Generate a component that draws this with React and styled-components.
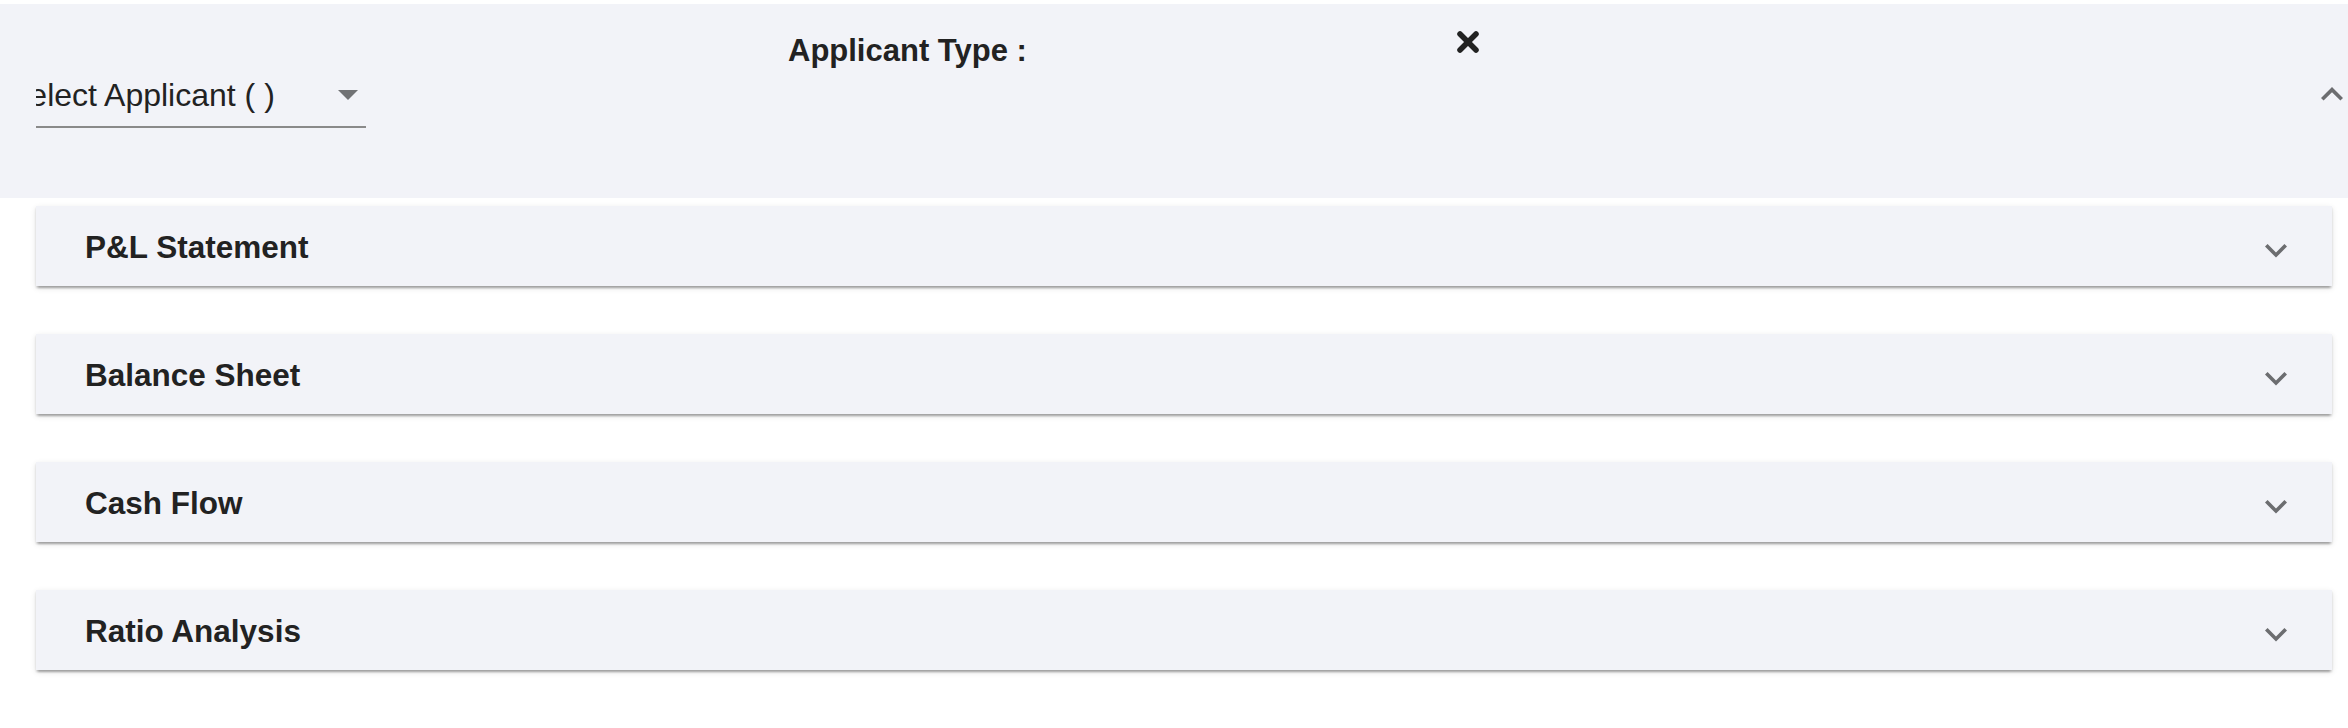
import React from 'react';
import styled, { createGlobalStyle } from 'styled-components';

const GlobalStyle = createGlobalStyle`
  html, body {
    margin: 0;
    padding: 0;
    background: #ffffff;
    font-family: "Liberation Sans", Arial, sans-serif;
    color: #212121;
  }
`;

const Page = styled.div`
  padding-top: 4px;
  min-height: 724px;
`;

const Header = styled.div`
  display: flex;
  align-items: flex-start;
  height: 194px;
  padding: 0 5px 0 36px;
  background: #f2f3f8;
`;

const SelectCol = styled.div`
  width: 752px;
  flex: none;
  padding-top: 71px;
`;

const SelectBox = styled.div`
  display: flex;
  align-items: center;
  width: 330px;
  padding-bottom: 11px;
  border-bottom: 2px solid #8a8a8a;
`;

const SelectValue = styled.div`
  flex: 1;
  overflow: hidden;
  white-space: nowrap;
  font-size: 32px;
  line-height: 40px;
  color: #222;

  span {
    display: inline-block;
    margin-left: -28px;
  }
`;

const DropArrow = styled.svg`
  width: 20px;
  height: 10px;
  margin-right: 8px;
  fill: #717275;
  flex: none;
`;

const LabelCol = styled.div`
  width: 669px;
  flex: none;
  padding-top: 29px;
  font-size: 31px;
  font-weight: bold;
  line-height: 36px;
  color: #222;
`;

const CloseIcon = styled.svg`
  width: 22px;
  height: 22px;
  margin-top: 27px;
  flex: none;
  stroke: #222;
  stroke-width: 5.5;
  stroke-linecap: round;
`;

const Spacer = styled.div`
  flex: 1;
`;

const Chevron = styled.svg`
  width: 22px;
  height: 13.6px;
  flex: none;
  fill: #6c6d70;
  margin-top: ${p => p.$top || 0}px;
`;

const List = styled.div`
  display: flex;
  flex-direction: column;
  gap: 48px;
  padding: 8px 16px 40px 36px;
`;

const Row = styled.div`
  display: flex;
  align-items: center;
  height: 80px;
  padding: 0 45px 0 49px;
  background: #f2f3f8;
  box-shadow: 0 4px 2px -2px rgba(0, 0, 0, 0.2), 0 2px 2px 0 rgba(0, 0, 0, 0.14),
    0 2px 6px 0 rgba(0, 0, 0, 0.12);
`;

const RowTitle = styled.div`
  flex: 1;
  font-size: 31.5px;
  font-weight: bold;
  color: #222;
  padding-top: 2px;
`;

const ExpandMore = ({ top }) => (
  <Chevron viewBox="6 8.59 12 7.41" $top={top}>
    <path d="M16.59 8.59 12 13.17 7.41 8.59 6 10l6 6 6-6z" />
  </Chevron>
);

const ExpandLess = ({ top }) => (
  <Chevron viewBox="6 8 12 7.41" $top={top}>
    <path d="M12 8l-6 6 1.41 1.41L12 10.83l4.59 4.58L18 14z" />
  </Chevron>
);

const sections = ['P&L Statement', 'Balance Sheet', 'Cash Flow', 'Ratio Analysis'];

export default function App() {
  return (
    <Page>
      <GlobalStyle />
      <Header>
        <SelectCol>
          <SelectBox>
            <SelectValue>
              <span>Select Applicant ( )</span>
            </SelectValue>
            <DropArrow viewBox="7 10 10 5">
              <path d="M7 10l5 5 5-5z" />
            </DropArrow>
          </SelectBox>
        </SelectCol>
        <LabelCol>Applicant Type :</LabelCol>
        <CloseIcon viewBox="0 0 22 22">
          <line x1="3" y1="3" x2="19" y2="19" />
          <line x1="19" y1="3" x2="3" y2="19" />
        </CloseIcon>
        <Spacer />
        <ExpandLess top={83} />
      </Header>
      <List>
        {sections.map(title => (
          <Row key={title}>
            <RowTitle>{title}</RowTitle>
            <ExpandMore top={10} />
          </Row>
        ))}
      </List>
    </Page>
  );
}
